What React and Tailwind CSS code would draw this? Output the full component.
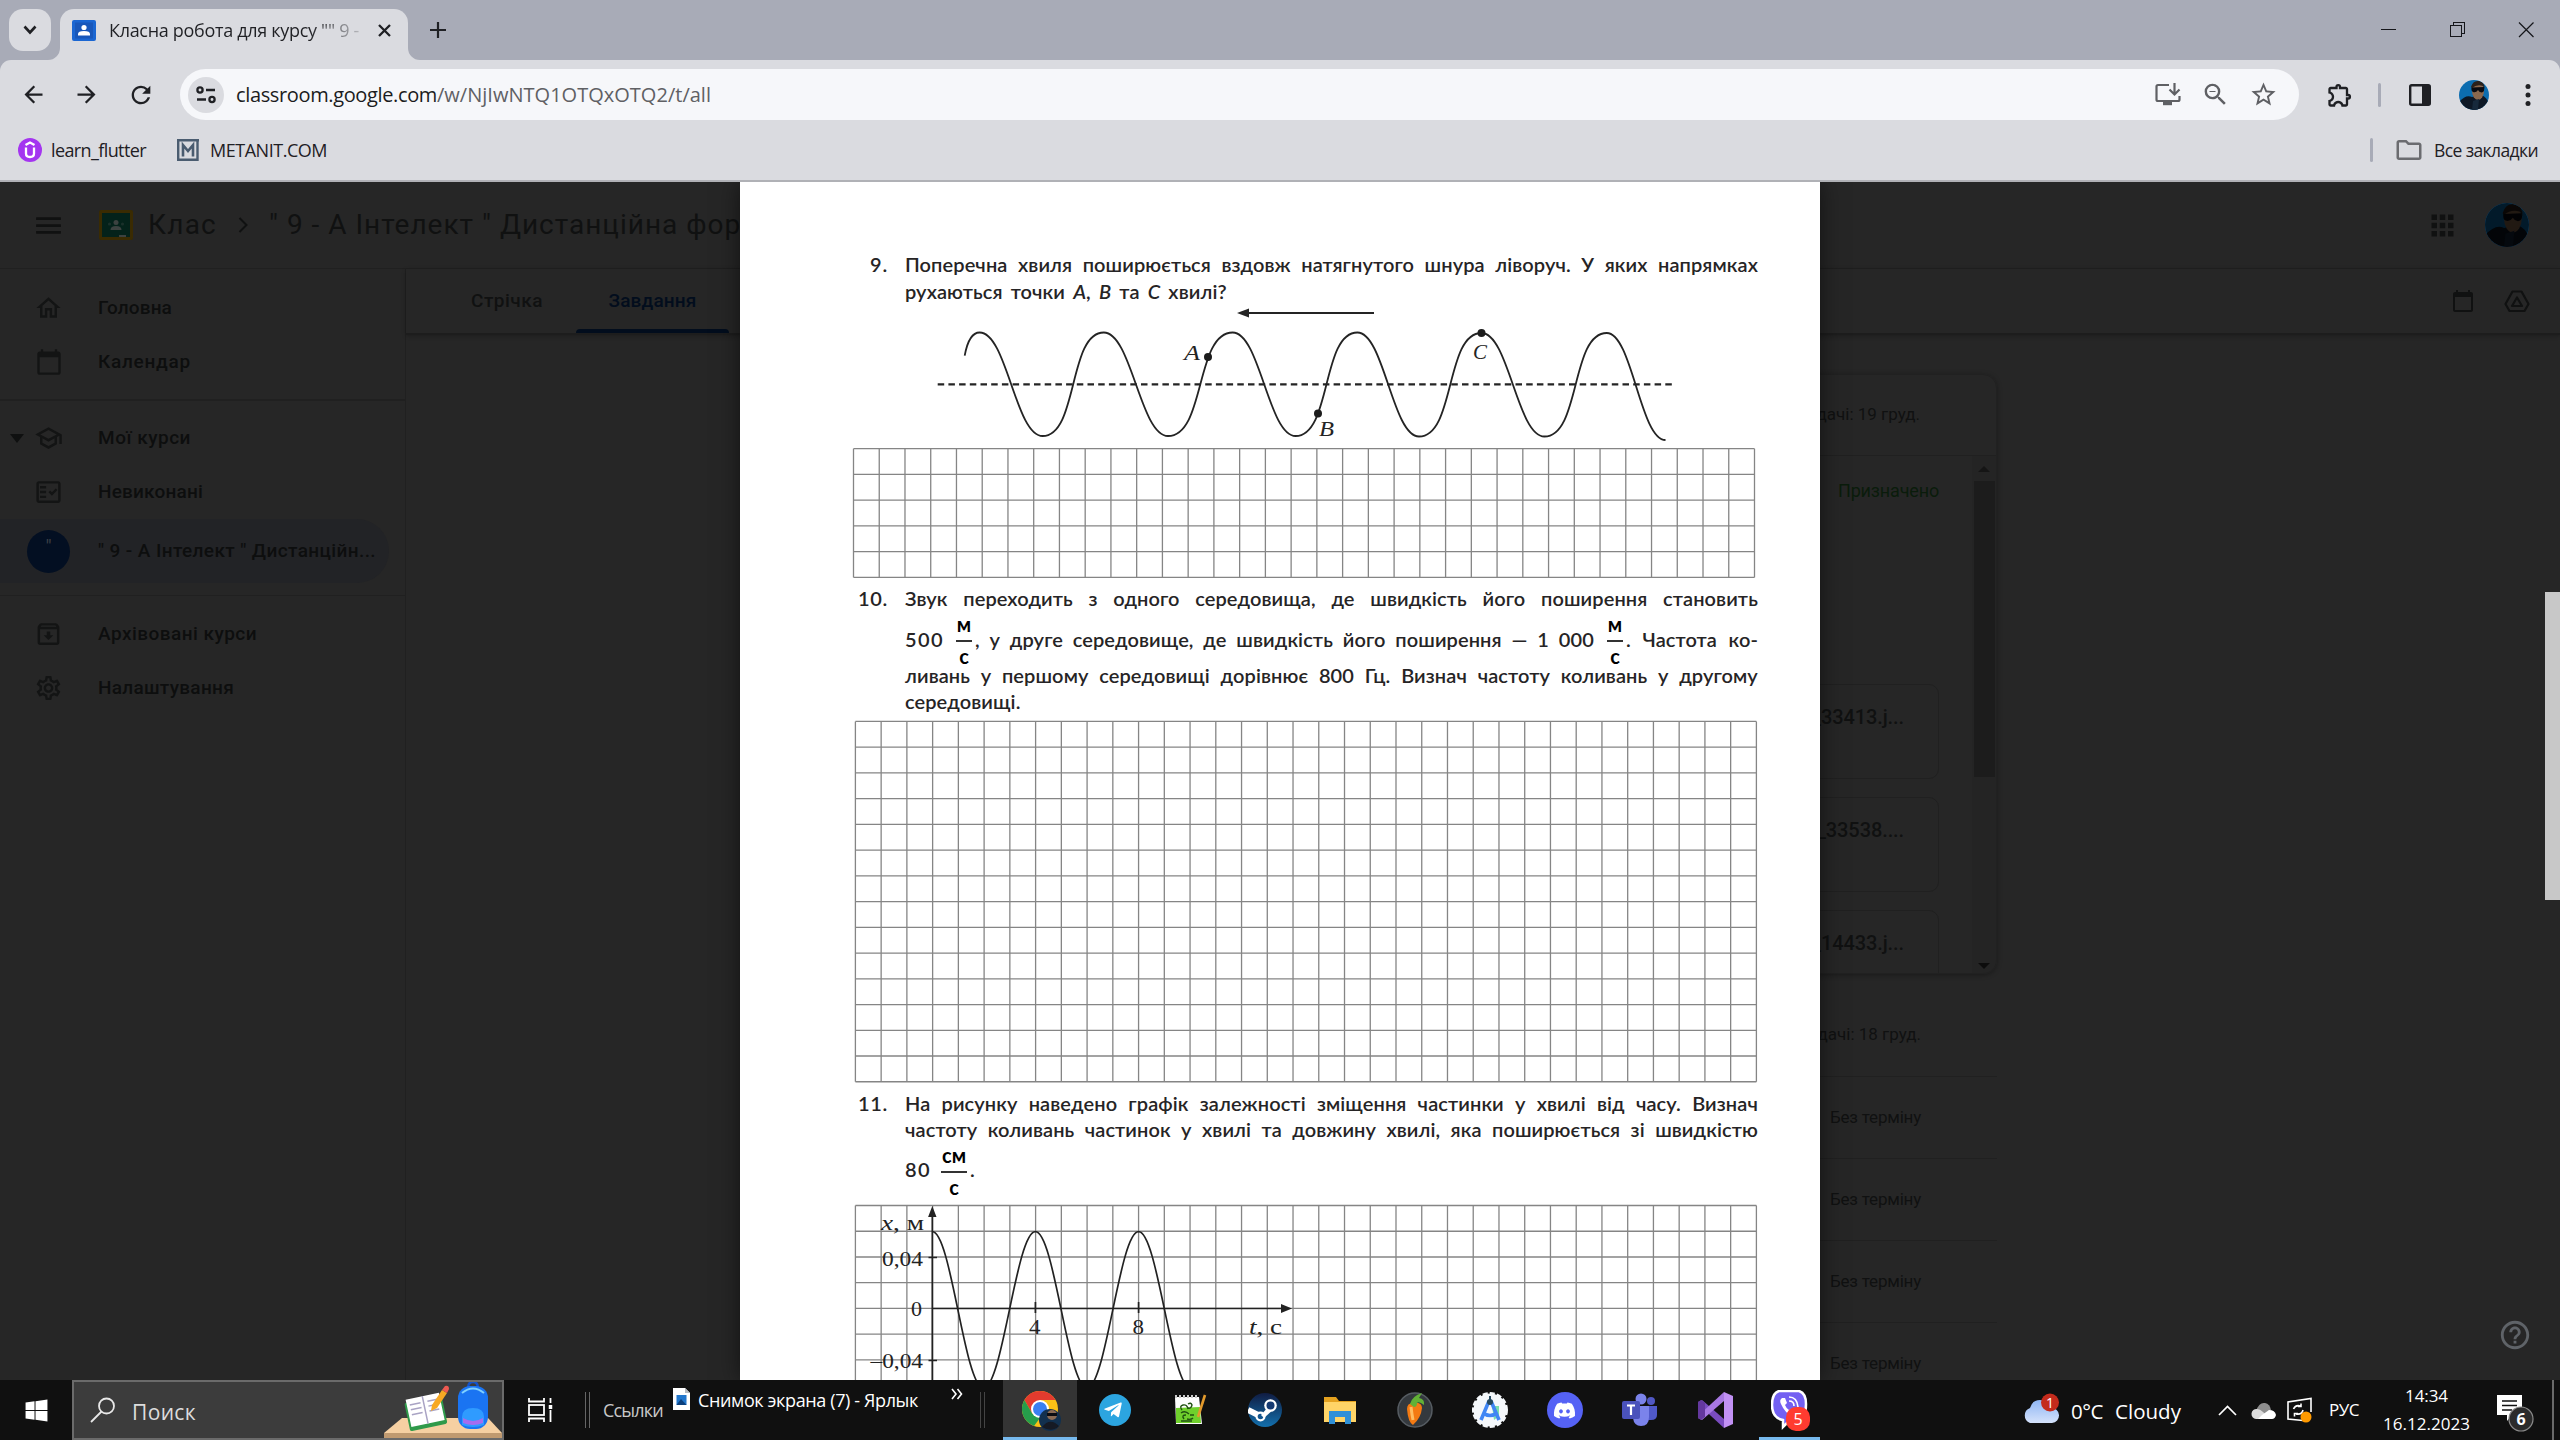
import React, { useLayoutEffect, useRef } from "react";
import {
  MdMenu, MdOutlineHome, MdOutlineSchool, MdOutlineFactCheck, MdOutlineArchive, MdOutlineSettings,
  MdHelpOutline, MdStarBorder, MdZoomOut, MdOutlineExtension, MdArrowBack,
  MdArrowForward, MdRefresh, MdCalendarToday, MdOutlineFolder, MdApps,
} from "react-icons/md";
import { FaTelegramPlane, FaDiscord, FaWindows } from "react-icons/fa";

const ui = "font-['Open_Sans',sans-serif]";
const gs = "font-['Roboto',sans-serif]";

/* Spreads its text over the width of its box by adjusting letter spacing. */
function Fit({ className = "", children }) {
  const box = useRef(null);
  const txt = useRef(null);
  useLayoutEffect(() => {
    const el = txt.current;
    el.style.letterSpacing = "0px";
    const n = el.textContent.length;
    const diff = box.current.clientWidth - el.getBoundingClientRect().width;
    el.style.letterSpacing = diff / n + "px";
  });
  return (
    <div ref={box} className={"shrink-0 whitespace-pre " + className}>
      <span ref={txt}>{children}</span>
    </div>
  );
}

/* ---------- browser chrome ---------- */

function Avatar({ className, dim }) {
  return (
    <svg viewBox="0 0 30 30" className={className}>
      <clipPath id={dim ? "avd" : "avl"}><circle cx="15" cy="15" r="15" /></clipPath>
      <g clipPath={dim ? "url(#avd)" : "url(#avl)"}>
        <rect width="30" height="30" fill="#0c6db0" />
        <path d="M0 22 Q7 14 13 17 L22 15 Q28 17 30 24 V30 H0Z" fill="#0d1725" />
        <ellipse cx="19" cy="11" rx="6" ry="9" fill="#8a684e" />
        <path d="M12 7 Q14 0 20 1 Q26 2 25.5 9 L24 6 Q18 4 13 8Z" fill="#2b211b" />
        <path d="M12.5 7.5 L25 7 Q26 12 22.500 12.500 Q20 12 19 10 Q17 13 14 12 Q12 11 12.5 7.5Z" fill="#0a0c12" />
        <path d="M14 21 L20 19 L19 30 H13Z" fill="#17293c" />
        {dim && <rect width="30" height="30" fill="#000" opacity="0.76" />}
      </g>
    </svg>
  );
}

function TabStrip() {
  return (
    <div className="flex h-[60px] bg-[#a8abb7]">
      <div className="mt-[9px] ml-[9px] flex h-[42px] w-[42px] items-center justify-center rounded-[14px] bg-[#dadbe0]">
        <svg width="14" height="10" viewBox="0 0 14 10" fill="none" stroke="#1f2024" strokeWidth="2.6"><path d="M1.500 1.500 7 7.500l5.500-6" /></svg>
      </div>
      <div className="mt-12 h-3 w-[9px] shrink-0 overflow-visible">
        <svg width="12" height="12" viewBox="0 0 12 12" className="-ml-[3px]"><path d="M12 0V12H0A12 12 0 0 0 12 0Z" fill="#dadbe0" /></svg>
      </div>
      <div className="mt-[9px] flex w-[348px] items-center rounded-t-[14px] bg-[#dadbe0] pb-[9px] pl-3">
        <svg width="24" height="21" viewBox="0 0 24 21">
          <rect width="24" height="21" rx="2" fill="#1a66d2" /><rect x="3" y="2.500" width="18" height="16" fill="#1857ba" />
          <circle cx="12" cy="7.500" r="2.600" fill="#fff" /><path d="M6 15.500v-1.500q0-3 6-3t6 3v1.500z" fill="#fff" />
        </svg>
        <Fit className={"ml-[13px] w-[250px] bg-linear-to-r from-[#1f2024] from-80% to-[#1f2024]/20 bg-clip-text text-[18px] leading-6 text-transparent " + ui}>
          {'Класна робота для курсу "" 9 -'}
        </Fit>
        <svg width="13" height="13" viewBox="0 0 13 13" className="ml-[19px]" stroke="#1f2024" strokeWidth="2.300"><path d="M1 1 12 12M12 1 1 12" /></svg>
      </div>
      <svg width="12" height="12" viewBox="0 0 12 12" className="mt-12 shrink-0"><path d="M0 0V12H12A12 12 0 0 1 0 0Z" fill="#dadbe0" /></svg>
      <svg width="16" height="16" viewBox="0 0 16 16" className="mt-[22px] ml-[10px]" stroke="#1f2024" strokeWidth="2.200"><path d="M8 0V16M0 8H16" /></svg>
      <div className="flex-1" />
      <svg width="154" height="16" viewBox="0 0 154 16" className="mt-[22px] mr-[26px]" fill="none" stroke="#15161a" strokeWidth="1.200" shapeRendering="crispEdges">
        <path d="M1 7.500H16" /><rect x="70.500" y="3.500" width="11" height="11" /><path d="M73.500 3.500V.5H84.500V11.500H81.500" />
        <path d="M139 0.500 153.500 15M153.500 0.500 139 15" shapeRendering="auto" />
      </svg>
    </div>
  );
}

function Toolbar() {
  return (
    <div className="bg-[#a8abb7]">
      <div className="flex h-[69px] items-center rounded-t-[11px] bg-[#dadbe0] text-[#1f2024]">
        <MdArrowBack className="ml-[20px] size-[27px]" />
        <MdArrowForward className="ml-[26px] size-[27px]" />
        <MdRefresh className="ml-[27px] size-[28px]" />
        <div className="ml-[25px] flex h-[51px] w-[2119px] items-center rounded-full bg-[#f6f7fa]">
          <div className="ml-2 flex size-9 items-center justify-center rounded-full bg-[#dadbe0]">
            <svg width="20" height="18" viewBox="0 0 20 18" fill="none" stroke="#1f2024" strokeWidth="2.300">
              <circle cx="4" cy="4" r="2.600" /><path d="M10 4h9M1 13.500h9" /><circle cx="16" cy="13.500" r="2.600" />
            </svg>
          </div>
          <Fit className={"ml-3 w-[201px] text-[20px] leading-6 text-[#1b1c20] " + ui}>classroom.google.com</Fit>
          <Fit className={"w-[274px] text-[20px] leading-6 text-[#5f6064] " + ui}>/w/NjIwNTQ1OTQxOTQ2/t/all</Fit>
          <div className="flex-1" />
          <svg width="26" height="23" viewBox="0 0 26 23" fill="none" stroke="#5f6064" strokeWidth="2.200">
            <path d="M14 2H3Q1.500 2 1.500 3.500V16.500Q1.500 18 3 18H23Q24.500 18 24.500 16.500V13" /><path d="M8 20.500h9" strokeWidth="3.400" /><path d="M19.500 0V11M14.500 6.500l5 5 5-5" />
          </svg>
          <MdZoomOut className="ml-[20px] size-[29px] text-[#5f6064]" />
          <MdStarBorder className="mr-[21px] ml-[19px] size-[29px] text-[#5f6064]" />
        </div>
        <MdOutlineExtension className="ml-[27px] size-[28px]" />
        <div className="ml-[24px] h-6 w-[3px] rounded bg-[#a8abb7]" />
        <svg width="22" height="22" viewBox="0 0 22 22" className="ml-[28px]"><rect x="1.200" y="1.200" width="19.600" height="19.600" rx="1.500" fill="none" stroke="#1f2024" strokeWidth="2.400" /><rect x="13" y="1" width="8" height="20" fill="#1f2024" /></svg>
        <Avatar className="ml-[28px] size-[30px]" />
        <svg width="6" height="24" viewBox="0 0 6 24" className="ml-[36px]" fill="#1f2024"><circle cx="3" cy="3.500" r="2.500" /><circle cx="3" cy="12" r="2.500" /><circle cx="3" cy="20.500" r="2.500" /></svg>
      </div>
    </div>
  );
}

function Bookmarks() {
  return (
    <div className="flex h-[53px] items-center border-b-2 border-[#b0b1b6] bg-[#dadbe0] pb-[9px] text-[#1f2024]">
      <svg width="24" height="24" viewBox="0 0 24 24" className="ml-[18px]"><circle cx="12" cy="12" r="12" fill="#a435f0" /><path d="M7.500 7 12 4.500 16.500 7M8 9.500v6q0 3.500 4 3.500t4-3.500v-6" fill="none" stroke="#fff" strokeWidth="2.300" /></svg>
      <Fit className={"ml-[9px] w-[95px] text-[18px] leading-6 " + ui}>learn_flutter</Fit>
      <svg width="22" height="22" viewBox="0 0 22 22" className="ml-[31px]" fill="none" stroke="#4a5c70"><path d="M20.500 0V20.800H1.200V1.200H22" strokeWidth="2.400" /><path d="M6 17.500V6L11 12 16 6V17.500" strokeWidth="2.600" /></svg>
      <Fit className={"ml-[11px] w-[117px] text-[18px] leading-6 " + ui}>METANIT.COM</Fit>
      <div className="flex-1" />
      <div className="h-6 w-[3px] rounded bg-[#a8abb7]" />
      <MdOutlineFolder className="ml-[21px] size-[30px] text-[#6b6c70]" />
      <Fit className={"mr-[22px] ml-[10px] w-[104px] text-[17.500px] leading-6 " + ui}>Все закладки</Fit>
    </div>
  );
}

/* ---------- classroom page behind the document ---------- */

function NavRow({ icon, w, children }) {
  return (
    <div className="flex h-[54px] items-center">
      <div className="ml-[34px] flex w-[29px] justify-center text-[30px] text-[#131414]">{icon}</div>
      <Fit className={"ml-[35px] text-[19px] leading-6 font-medium " + w}>{children}</Fit>
    </div>
  );
}

function Sidebar() {
  return (
    <div className={"w-[406px] shrink-0 border-r border-[#202020] pt-3 text-[#0d0e0e] " + gs}>
      <NavRow icon={<MdOutlineHome />} w="w-[74px]">Головна</NavRow>
      <NavRow icon={<MdCalendarToday className="size-[28px]" />} w="w-[93px]">Календар</NavRow>
      <div className="mt-[10px] mb-[10px] h-[2px] bg-[#202020]" />
      <div className="flex">
        <svg width="14" height="10" viewBox="0 0 14 10" className="mt-[23px] mr-[-24px] ml-[10px]"><path d="M0 0H14L7 9Z" fill="#0f1010" /></svg>
        <NavRow icon={<MdOutlineSchool />} w="w-[93px]">Мої курси</NavRow>
      </div>
      <NavRow icon={<MdOutlineFactCheck />} w="w-[105px]">Невиконані</NavRow>
      <div className="flex h-16 w-[389px] items-center rounded-r-full bg-[#222326]">
        <div className="ml-[27px] flex size-[43px] items-center justify-center rounded-full bg-[#030f22] pb-2 text-[19px] text-[#3d4046]">"</div>
        <Fit className="ml-7 w-[278px] text-[19px] leading-6 font-medium">{'" 9 - А Інтелект " Дистанційн...'}</Fit>
      </div>
      <div className="mt-[12px] mb-[11px] h-px bg-[#202020]" />
      <NavRow icon={<MdOutlineArchive />} w="w-[159px]">Архівовані курси</NavRow>
      <NavRow icon={<MdOutlineSettings />} w="w-[136px]">Налаштування</NavRow>
    </div>
  );
}

function FileBox({ name }) {
  return (
    <div className="mb-[18px] flex h-[95px] w-[660px] shrink-0 justify-end rounded-[10px] border border-[#202020] pt-[20px] pr-[34px] text-[20px] leading-6 font-medium tracking-[-0.1px]">
      {name}
    </div>
  );
}

function ClassPage() {
  return (
    <div className={"flex h-full flex-col bg-[#262626] text-[#101111] " + gs}>
      <div className="flex h-[87px] shrink-0 items-center border-b border-[#202020]">
        <MdMenu className="ml-[32px] size-[33px]" />
        <svg width="34" height="30" viewBox="0 0 34 30" className="ml-[34px]">
          <rect width="34" height="30" rx="2" fill="#3a2b02" /><rect x="3" y="3" width="28" height="24" fill="#04221a" />
          <circle cx="17" cy="12.500" r="2.500" fill="#3c4240" /><path d="M11.500 20q0-4 5.500-4t5.500 4z" fill="#3c4240" /><circle cx="10.500" cy="14" r="1.600" fill="#1a302a" /><circle cx="23.500" cy="14" r="1.600" fill="#1a302a" /><rect x="20" y="25" width="7" height="2" fill="#3c4240" />
        </svg>
        <Fit className="ml-[15px] w-[69px] text-[28px] leading-9">Клас</Fit>
        <svg width="10" height="16" viewBox="0 0 10 16" className="ml-[21px]" fill="none" stroke="#101111" strokeWidth="2"><path d="M1.500 1 8.500 8l-7 7" /></svg>
        <Fit className="ml-[21px] w-[494px] text-[28px] leading-9">{'" 9 - А Інтелект " Дистанційна форм'}</Fit>
        <div className="flex-1" />
        <MdApps className="size-[33px]" />
        <Avatar dim className="mr-[31px] ml-[26px] size-[44px]" />
      </div>
      <div className="flex min-h-0 flex-1">
        <Sidebar />
        <div className="flex min-w-0 flex-1 flex-col">
          <div className="flex h-[66px] shrink-0 items-center border-b-2 border-[#1d1d1d] text-[19px] font-medium shadow-[0_1px_4px_rgba(0,0,0,0.25)]">
            <Fit className="ml-[65px] w-[72px] leading-6">Стрічка</Fit>
            <div className="ml-[33px] flex h-full w-[153px] flex-col items-center justify-between pt-5 text-[#020d1d]">
              <Fit className="w-[88px] leading-6">Завдання</Fit>
              <div className="h-1 w-full rounded-t bg-[#020d1d]" />
            </div>
            <div className="flex-1" />
            <MdCalendarToday className="size-[24px]" />
            <svg width="26" height="23" viewBox="0 0 26 23" className="mr-[30px] ml-[29px]" fill="none" stroke="#101111" strokeWidth="2.200" strokeLinejoin="round"><path d="M8.500 1.500H17.500L24.500 14 20.500 21H5.500L1.500 14Z" /><path d="M13 7.500 18 16H8Z" /></svg>
          </div>
          <div className="mt-[39px] ml-[800px] flex h-[600px] w-[791px] shrink-0 flex-col overflow-hidden rounded-[14px] border border-[#212121] shadow-[0_1px_5px_rgba(0,0,0,0.35)]">
            <div className="flex h-[81px] shrink-0 items-center justify-end border-b border-[#202020] pr-[76px] text-[17px]">Термін здачі: 19 груд.</div>
            <div className="flex min-h-0 flex-1">
              <div className="flex flex-1 flex-col items-end pr-[33px]">
                <Fit className="mt-[23px] mb-[181px] w-[101px] text-[18px] leading-6 text-[#0a1c0b]">Призначено</Fit>
                <FileBox name="IMG_33413.j..." />
                <FileBox name="IMG_33538...." />
                <FileBox name="IMG_14433.j..." />
              </div>
              <div className="flex w-6 flex-col items-center bg-[#242424]">
                <svg width="12" height="6" viewBox="0 0 12 6" className="mt-[10px]"><path d="M0 6H12L6 0Z" fill="#151515" /></svg>
                <div className="mt-[9px] h-[296px] w-[21px] bg-[#1c1c1c]" />
                <div className="flex-1" />
                <svg width="12" height="6" viewBox="0 0 12 6" className="mb-[4px]"><path d="M0 0H12L6 6Z" fill="#0c0c0c" /></svg>
              </div>
            </div>
          </div>
          <div className="mt-[19px] ml-[800px] w-[791px] text-[17px]">
            <div className="flex h-[84px] items-center justify-end border-b border-[#202020] pr-[76px]">Термін здачі: 18 груд.</div>
            {[0, 1, 2, 3].map((i) => (
              <div key={i} className="flex h-[82px] items-center justify-end border-b border-[#202020] pr-[76px]"><Fit className="w-[91px]">Без терміну</Fit></div>
            ))}
          </div>
        </div>
      </div>
    </div>
  );
}

/* ---------- document page ---------- */

function Line({ text, className = "" }) {
  return (
    <div className={"flex h-[26.5px] justify-between leading-[26.5px] whitespace-pre " + className}>
      {text.split(" ").map((w, i) => <span key={i}>{w}</span>)}
    </div>
  );
}

function Frac({ top, bottom, bar }) {
  return (
    <div className="mt-[2px] flex flex-col items-center text-[20px] leading-5 font-bold text-black">
      <span>{top}</span>
      <div className={"mt-[6px] mb-[4px] h-[2px] shrink-0 bg-[#333] " + bar} />
      <span>{bottom}</span>
    </div>
  );
}

function Problem({ n, w, children }) {
  return (
    <div className="flex text-[20px] font-semibold tracking-[0.1px] text-[#262425]">
      <div className="flex w-[165px] justify-end pr-[17px] leading-[26.5px]"><Fit className={w}>{n}</Fit></div>
      <div className="w-[853px]">{children}</div>
    </div>
  );
}

function GridLines({ x, y, rows, width = 901 }) {
  const c = width / 35;
  const r = 25.74;
  return (
    <g stroke="#858585" strokeWidth="1.300">
      {Array.from({ length: 36 }, (_, i) => <path key={"v" + i} d={`M${x + i * c} ${y}V${y + rows * r}`} />)}
      {Array.from({ length: rows + 1 }, (_, i) => <path key={"h" + i} d={`M${x} ${y + i * r}H${x + width}`} />)}
    </g>
  );
}

/* Smooth curve through alternating crests and troughs; kf and kr set the steepness of falling and rising parts. */
function curve(points, kf, kr) {
  return points.slice(1).map(([x, y], i) => {
    const [px, py] = points[i];
    const d = (x - px) * (y > py ? kf : kr);
    return `C${px + d} ${py} ${x - d} ${y} ${x} ${y}`;
  }).join("");
}

const wave = [[979.700, 332.500], [1042.600, 436], [1103.800, 332.500], [1168, 436], [1232.700, 332.500], [1295.600, 436], [1357.400, 332.500], [1419, 436.500], [1481.500, 333], [1544.400, 436.500], [1606.800, 333], [1665.500, 440]];
const graph = [[932.300, 1231.700], [983.500, 1388], [1035.400, 1231.700], [1087, 1388], [1138.600, 1231.700], [1190.500, 1388]];

function Sheet() {
  return (
    <div className="h-full w-[1080px] overflow-hidden bg-white pt-[69px] font-['Lato','Open_Sans',sans-serif] shadow-[0_0_22px_rgba(0,0,0,0.55)]">
      <Problem n="9." w="w-[18px]">
        <Line text="Поперечна хвиля поширюється вздовж натягнутого шнура ліворуч. У яких напрямках" />
        <div className="h-[26.5px] leading-[26.5px] [word-spacing:3px]">рухаються точки <i>А</i>, <i>В</i> та <i>С</i> хвилі?</div>
      </Problem>
      <svg width="1080" height="144" viewBox="740 304 1080 144" className="block" fill="none" stroke="#242424" strokeWidth="1.800">
        <path d="M1246 313H1374" strokeWidth="2" /><path d="M1237 313 1249 308.500V317.500Z" fill="#242424" stroke="none" />
        <path d={"M964.700 355.700C967 343 972 332.500 979.700 332.500" + curve(wave, 0.43, 0.58)} />
        <path d="M937.700 384.300H1675" strokeDasharray="6.500 4.200" strokeWidth="2.200" />
        <g fill="#1c1c1c" stroke="none"><circle cx="1208" cy="357" r="4" /><circle cx="1318" cy="413.500" r="4" /><circle cx="1481.500" cy="333" r="4" /></g>
        <g fill="#242424" stroke="none" fontFamily="Liberation Serif" fontStyle="italic" fontSize="22">
          <text x="1184" y="360" textLength="16" lengthAdjust="spacingAndGlyphs">A</text><text x="1319" y="435.500" textLength="15" lengthAdjust="spacingAndGlyphs">B</text><text x="1473" y="358.500" textLength="14" lengthAdjust="spacingAndGlyphs">C</text>
        </g>
      </svg>
      <svg width="1080" height="131" viewBox="740 448 1080 131" className="block"><GridLines x={853.500} y={448.700} rows={5} /></svg>
      <div className="h-[6px]" />
      <Problem n="10." w="w-[30px]">
        <Line text="Звук переходить з одного середовища, де швидкість його поширення становить" />
        <div className="flex h-[50px] [&>div]:shrink-0">
          <Fit className="mt-[14px] w-[39px] leading-[26.5px]">500</Fit>
          <div className="w-[12px]" />
          <Frac top="м" bottom="с" bar="w-[16px]" />
          <Line className="mt-[14px] ml-[3px] w-[619px]" text=", у друге середовище, де швидкість його поширення — 1 000" />
          <div className="w-[13px]" />
          <Frac top="м" bottom="с" bar="w-[16px]" />
          <Line className="mt-[14px] ml-[3px] w-[132px]" text=". Частота ко-" />
        </div>
        <Line text="ливань у першому середовищі дорівнює 800 Гц. Визнач частоту коливань у другому" />
        <div className="h-[26.5px] leading-[26.5px]">середовищі.</div>
      </Problem>
      <svg width="1080" height="368" viewBox="740 715.500 1080 368" className="block"><GridLines x={855.400} y={721.900} rows={14} /></svg>
      <div className="h-[7px]" />
      <Problem n="11." w="w-[30px]">
        <Line text="На рисунку наведено графік залежності зміщення частинки у хвилі від часу. Визнач" />
        <Line text="частоту коливань частинок у хвилі та довжину хвилі, яка поширюється зі швидкістю" />
        <div className="flex h-[54px]">
          <Fit className="mt-[13px] w-[26px] leading-[26.5px]">80</Fit>
          <div className="w-[10px]" />
          <Frac top="см" bottom="с" bar="w-[26px]" />
          <span className="mt-[13px] ml-[3px] leading-[26.5px]">.</span>
        </div>
      </Problem>
      <svg width="1080" height="184" viewBox="740 1197 1080 184" className="block">
        <GridLines x={855.400} y={1205.500} rows={8} />
        <g fill="none" stroke="#222" strokeWidth="1.700">
          <path d="M932.300 1214V1381M932.300 1308.500H1282M1035.400 1302V1313M1138.600 1302V1313M928.500 1257.500H937M928.500 1360.500H937" />
          <path d={"M932.300 1231.700" + curve(graph, 0.37, 0.37)} />
        </g>
        <path d="M932.300 1206 936.500 1217H928.100ZM1292 1308.500 1281 1304V1313Z" fill="#222" />
        <g fill="#222" fontFamily="Liberation Serif" fontSize="20.500">
          <text x="881" y="1230" textLength="43" lengthAdjust="spacingAndGlyphs"><tspan fontStyle="italic">x</tspan>, м</text>
          <text x="882" y="1265.500" textLength="41" lengthAdjust="spacingAndGlyphs">0,04</text>
          <text x="911" y="1315.500" textLength="11" lengthAdjust="spacingAndGlyphs">0</text>
          <text x="870.500" y="1368" textLength="52.500" lengthAdjust="spacingAndGlyphs">–0,04</text>
          <text x="1029" y="1334" textLength="11.500" lengthAdjust="spacingAndGlyphs">4</text><text x="1132.500" y="1334" textLength="11.500" lengthAdjust="spacingAndGlyphs">8</text>
          <text x="1249" y="1334" textLength="33" lengthAdjust="spacingAndGlyphs"><tspan fontStyle="italic">t</tspan>, с</text>
        </g>
      </svg>
    </div>
  );
}

/* ---------- taskbar ---------- */

function AppTile({ children, className = "" }) {
  return <div className={"flex h-[60px] w-[75px] shrink-0 items-center justify-center " + className}>{children}</div>;
}

function DeskArt() {
  return (
    <svg width="118" height="56" viewBox="0 0 118 56">
      <path d="M18 36H104L118 51H0Z" fill="#f6d0a2" /><path d="M0 51H118V56H0Z" fill="#c09a70" />
      <g transform="translate(4 0) rotate(-12 37 32)"><rect x="19" y="17" width="38" height="29" rx="2" fill="#2f9a4a" /><path d="M21 14h17v28H21zM38 14h17v28H38z" fill="#fff" /><path d="M38 14V42M24 20h11M24 25h11M24 30h11M42 20h10M42 25h10M42 30h10" stroke="#a9a3c4" strokeWidth="1.500" /></g>
      <path d="M47 29 48 23 58 8 63 11 53 26Z" fill="#f7a823" /><path d="M58 8l3-4q4-1 4 3l-2 4z" fill="#ee5a52" />
      <g transform="translate(2 -1)">
        <path d="M82 7q0-6 5-6t5 6" fill="none" stroke="#1552c8" strokeWidth="2.500" />
        <rect x="72" y="5" width="30" height="43" rx="12" fill="#1a74f2" /><path d="M76 12q11-9 22 0" fill="none" stroke="#7fd0ff" strokeWidth="2" />
        <path d="M76 44V36q0-9 11-9t11 9v8q-11 4-22 0z" fill="#2f9bff" /><path d="M77 37q10 6 20 0v5q-10 4-20 0z" fill="#a56cf0" />
      </g>
    </svg>
  );
}

function Taskbar() {
  return (
    <div className={"flex h-[60px] items-center bg-[#101010] text-white " + ui}>
      <FaWindows className="ml-6 size-[25px]" />
      <div className="ml-[23px] flex h-[60px] w-[432px] items-center border-2 border-[#6b6b6b] bg-[#3c3c3c]">
        <svg width="26" height="26" viewBox="0 0 26 26" className="ml-4" fill="none" stroke="#e8e8e8" strokeWidth="1.800"><circle cx="16.500" cy="9" r="7.500" /><path d="M11.500 14.500 1 25" /></svg>
        <Fit className="ml-[16px] w-[64px] pt-[3px] text-[21px] leading-6 text-[#dcdcdc]">Поиск</Fit>
        <div className="flex-1" />
        <DeskArt />
      </div>
      <svg width="26" height="26" viewBox="0 0 26 26" className="ml-[24px]" fill="none" stroke="#fff" strokeWidth="1.800"><path d="M1 1v3.500h15V1M1 25v-3.500h15V25" /><rect x="1" y="8" width="15" height="10" /><path d="M22.500 1v5M22.500 13v12" /><path d="M22.500 8v4" strokeWidth="3.500" /></svg>
      <div className="ml-[31px] flex h-[36px] w-[5px] justify-between"><div className="w-px bg-[#666]" /><div className="w-px bg-[#666]" /></div>
      <Fit className="ml-[13px] w-[60px] text-[18px] leading-6 text-[#c8c8c8]">Ссылки</Fit>
      <svg width="17" height="22" viewBox="0 0 17 22" className="mb-[22px] ml-[10px]"><path d="M0 0H12L17 5V22H0Z" fill="#fff" /><path d="M12 0V5H17Z" fill="#b7bcc2" /><rect x="3.500" y="7" width="10" height="10" fill="#2277cc" /><path d="M3.500 17 8 11 13.500 17Z" fill="#0b3f7c" /></svg>
      <Fit className="mb-5 ml-2 w-[220px] text-[18px] leading-6">Снимок экрана (7) - Ярлык</Fit>
      <svg width="12" height="12" viewBox="0 0 12 12" className="mb-8 ml-[33px]" fill="none" stroke="#fff" strokeWidth="1.600"><path d="M1 1l4 5-4 5M6.500 1l4 5-4 5" /></svg>
      <div className="ml-[17px] flex h-[36px] w-[5px] justify-between"><div className="w-px bg-[#444]" /><div className="w-px bg-[#444]" /></div>

      <div className="ml-[18px] flex h-[60px] w-[74px] shrink-0 items-center justify-center border-b-[3px] border-[#76b9ed] bg-[#343434] pt-1 pl-1">
        <svg width="40" height="40" viewBox="0 0 40 40">
          <circle cx="18" cy="18" r="18" fill="#fbc116" /><path d="M18 0A18 18 0 0 1 33.600 9H18L10.200 22.500 2.400 9A18 18 0 0 1 18 0Z" fill="#e33b2e" /><path d="M2.400 9 10.200 22.500 18 27 12 35A18 18 0 0 1 2.400 9Z" fill="#269e4b" />
          <circle cx="18" cy="18" r="9" fill="#fff" /><circle cx="18" cy="18" r="7" fill="#3a7ff0" />
          <circle cx="28" cy="29" r="11" fill="#12304e" /><circle cx="30" cy="24" r="5" fill="#8a6b54" /><path d="M25 22h10v3H25z" fill="#0a0c12" /><path d="M20 36q8-10 17-1-7 7-17 1z" fill="#161a24" />
        </svg>
      </div>
      <AppTile><div className="flex size-8 items-center justify-center rounded-full bg-[#2ca5e0]"><FaTelegramPlane className="mr-[3px] size-[20px]" /></div></AppTile>
      <AppTile>
        <svg width="34" height="34" viewBox="0 0 34 34"><path d="M2 4H26L29 31H3Z" fill="#fdfdfd" /><path d="M3 15 27 14 28 30H3Z" fill="#6fd02c" /><path d="M3 2v3M7 2v3M11 2v3M15 2v3M19 2v3M23 2v3" stroke="#ccc" strokeWidth="2" /><path d="M9 17q-3-4 1-5t5 4M8 20q4-3 8 1M11 26q-3-4 2-4M15 11q3-2 4 1-1 4-4 3M17 22h4M14 26q4 1 6-1M8 28h11" fill="none" stroke="#215211" strokeWidth="1.400" /><path d="M25 24 32 2" stroke="#e39a2c" strokeWidth="2.600" /></svg>
      </AppTile>
      <AppTile>
        <svg width="34" height="34" viewBox="0 0 34 34"><linearGradient id="st" x1="0" y1="0" x2="0" y2="1"><stop offset="0" stopColor="#101c42" /><stop offset="1" stopColor="#1370ad" /></linearGradient><circle cx="17" cy="17" r="17" fill="url(#st)" /><path d="M0 17 14 24" stroke="#fff" strokeWidth="6" /><circle cx="12.500" cy="23.500" r="5" fill="#fff" /><circle cx="12.500" cy="23.500" r="2.800" fill="#14568e" /><path d="M13 22 20 14 26 16 16 25Z" fill="#fff" /><circle cx="22.500" cy="12.500" r="6.300" fill="#fff" /><circle cx="22.500" cy="12.500" r="4" fill="#153a72" /></svg>
      </AppTile>
      <AppTile>
        <svg width="34" height="28" viewBox="0 0 34 28"><path d="M1 1H13L16 5H33V26H1Z" fill="#e5a21f" /><path d="M1 6H33V26H1Z" fill="#ffd467" /><path d="M6 28V15H28V28H22V21H12V28Z" fill="#2f90d8" /></svg>
      </AppTile>
      <AppTile>
        <svg width="36" height="36" viewBox="0 0 36 36"><circle cx="18" cy="18" r="17" fill="#34393e" stroke="#565c62" strokeWidth="1.500" /><path d="M10 17q0-6 6-6 9-1 9 5-1 10-9 17-5-3-6-16z" fill="#f47a12" /><path d="M14 15q1 8 2 13" stroke="#ffbe62" strokeWidth="3" fill="none" /><path d="M13 12Q15 4 25 1L22 6q6 1 5 7-5-4-7-2 0 4-3 4-4-3-4-3z" fill="#62b136" /></svg>
      </AppTile>
      <AppTile>
        <svg width="36" height="36" viewBox="0 0 36 36"><circle cx="18" cy="18" r="16.500" fill="#f5f8fb" stroke="#f5f8fb" strokeWidth="3" strokeDasharray="5 2" /><path d="M20 14h7v10l-5 4z" fill="#45d48a" opacity=".7" /><path d="M17 9 9 28M19 9l8 19M11 21q7 5 14 0" fill="none" stroke="#4086f4" strokeWidth="3.600" /><circle cx="18" cy="10" r="3" fill="#24485e" /><path d="M18 4v4" stroke="#24485e" strokeWidth="2" /></svg>
      </AppTile>
      <AppTile><div className="flex size-9 items-center justify-center rounded-full bg-[#5562f5]"><FaDiscord className="size-[23px]" /></div></AppTile>
      <AppTile>
        <svg width="36" height="34" viewBox="0 0 36 34"><circle cx="29" cy="8" r="4" fill="#5158c4" /><path d="M25 13h10v9q0 5-6 5h-4z" fill="#5059c9" /><circle cx="19" cy="6" r="5.500" fill="#7b83eb" /><path d="M11 13h16v11q0 9-8 9-7 0-8-8z" fill="#7b83eb" /><rect x="0" y="8" width="18" height="18" rx="2" fill="#4a52bb" /><path d="M5 12.500h8M9 12.500V22" stroke="#fff" strokeWidth="2.200" /></svg>
      </AppTile>
      <AppTile>
        <svg width="36" height="36" viewBox="0 0 36 36"><path d="M1 10 5 8 27 27V36L1 12Z" fill="#7a4cc0" /><path d="M1 26 5 28 27 9V0L1 24Z" fill="#a878e2" /><path d="M1 10 4 8 8 11V25L4 28 1 26Z" fill="#64389e" /><path d="M27 0 36 4V32L27 36Z" fill="#c291f4" /></svg>
      </AppTile>
      <div className="ml-[7px] flex h-[60px] w-[61px] shrink-0 items-center border-b-[3px] border-[#76b9ed] pt-1 pl-3">
        <svg width="39" height="42" viewBox="0 0 39 42">
          <path d="M8 1H28Q35 3 35 14 35 28 28 30L18 31 12 37V30Q1 28 1 15 1 3 8 1Z" fill="#7360f2" stroke="#fff" strokeWidth="2.500" />
          <path d="M11 8q-3 2-1 6 4 9 11 12 4 0 4-4l-4-3-3 1q-3-2-4-5l2-2-2-5z" fill="#fff" /><path d="M18 7q8 0 9 10M18 11q5 0 5 5" fill="none" stroke="#fff" strokeWidth="1.600" />
          <rect x="15" y="17" width="24" height="24" rx="10" fill="#ff3b30" /><text x="27" y="35" textAnchor="middle" fontSize="16" fill="#fff" fontFamily="Open Sans">5</text>
        </svg>
      </div>
      <div className="flex-1" />

      <svg width="38" height="31" viewBox="0 0 38 31" className="mb-[3px]">
        <linearGradient id="cl" x1="0" y1="0" x2="0" y2="1"><stop offset="0" stopColor="#8fb6f4" /><stop offset="1" stopColor="#d5e2fb" /></linearGradient>
        <path d="M8 30a8 8 0 0 1 0-15Q10 7 18 7t11 8a7.500 7.500 0 0 1 1 15z" fill="url(#cl)" /><circle cx="28" cy="9.500" r="9" fill="#c42b1c" /><text x="28" y="14.500" textAnchor="middle" fontSize="14" fill="#fff" fontFamily="Open Sans">1</text>
      </svg>
      <Fit className="ml-[11px] w-[32px] pt-[2px] text-[20.500px] leading-6">0°C</Fit>
      <Fit className="ml-[12px] w-[66px] pt-[2px] text-[20.500px] leading-6">Cloudy</Fit>
      <svg width="19" height="11" viewBox="0 0 19 11" className="ml-[37px]" fill="none" stroke="#fff" strokeWidth="1.700"><path d="M1 10 9.500 1.500 18 10" /></svg>
      <svg width="25" height="17" viewBox="0 0 25 17" className="ml-[14px]"><path d="M5 9Q8 0 14 1q5 1 6 7l-8 5z" fill="#8e8e8e" /><path d="M5 17a5 5 0 0 1 1-10q3 0 6 3l8 7z" fill="#dcdcdc" /><path d="M11 13 18 8q6 0 7 5-1 4-4 4H7z" fill="#fff" /></svg>
      <svg width="26" height="27" viewBox="0 0 26 27" className="ml-[11px]" fill="none" stroke="#fff" strokeWidth="1.600"><path d="M16 23.500 1 22V5L24 1.500V15" /><path d="M6.500 12q2-4.500 7-3M14 6.500V9.500H11M16 13q-1 5-7 4M7.500 19.500V16.500H11" /><circle cx="19" cy="20" r="5.500" fill="#ff9a00" stroke="none" /></svg>
      <Fit className="ml-[16px] w-[30px] text-[17px] leading-6">РУС</Fit>
      <div className="ml-[24px] flex h-full flex-col items-center justify-between pt-[2px] pb-[2px] text-[17px] leading-7">
        <Fit className="w-[43px]">14:34</Fit>
        <Fit className="w-[87px]">16.12.2023</Fit>
      </div>
      <svg width="38" height="38" viewBox="0 0 38 38" className="mt-2 ml-[27px]">
        <path d="M0 0H25V20H15L10 26V20H0Z" fill="#fff" /><path d="M5 6h15M5 10.500h15M5 15h10" stroke="#111" strokeWidth="1.500" />
        <circle cx="24" cy="24" r="12" fill="#2b2b2b" stroke="#8a8a8a" strokeWidth="1.200" /><text x="24" y="30" textAnchor="middle" fontSize="16" fontWeight="700" fill="#fff" fontFamily="Open Sans">6</text>
      </svg>
      <div className="mr-[6px] ml-[17px] h-full w-[2px] bg-[#6a6a6a]" />
    </div>
  );
}

export default function App() {
  return (
    <div className="flex h-[1440px] w-[2560px] flex-col overflow-hidden">
      <TabStrip />
      <Toolbar />
      <Bookmarks />
      <div className="relative h-[1198px] overflow-hidden">
        <ClassPage />
        <div className="absolute inset-0 flex justify-center"><Sheet /></div>
        <div className="absolute top-[410px] right-0 h-[308px] w-[15px] bg-[#c8c8c8]" />
        <MdHelpOutline className="absolute top-[1136px] right-[28px] size-[34px] text-[#5f6368]" />
      </div>
      <Taskbar />
    </div>
  );
}
